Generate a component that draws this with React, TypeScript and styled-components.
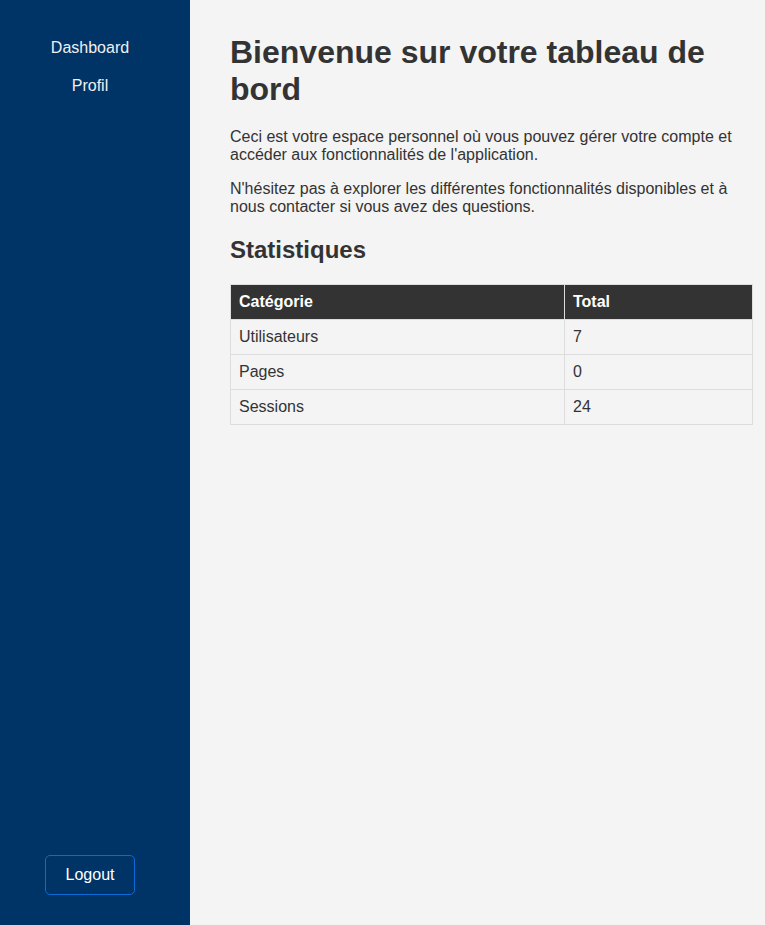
import React from "react";
import styled, { createGlobalStyle } from "styled-components";

const Global = createGlobalStyle`
  html, body { margin: 0; padding: 0; }
  body { font-family: "Liberation Sans", Arial, sans-serif; background: #f4f4f4; color: #333; }
`;

const Layout = styled.div`
  display: flex;
  min-height: 925px;
`;

const Sidebar = styled.nav`
  width: 190px;
  flex-shrink: 0;
  background: #003366;
  display: flex;
  flex-direction: column;
  align-items: center;
  padding: 29px 10px 30px 0;
  box-sizing: border-box;
`;

const NavList = styled.div`
  display: flex;
  flex-direction: column;
  align-items: center;
  flex: 1;
`;

const NavLink = styled.a`
  color: #f0f0f0;
  text-decoration: none;
  font-size: 16px;
  line-height: 18px;
  padding: 10px 0;
`;

const LogoutButton = styled.button`
  font-family: inherit;
  font-size: 16px;
  line-height: 18px;
  color: #fff;
  background: transparent;
  border: 1px solid #0a6bd6;
  border-radius: 5px;
  padding: 10px 20px;
  cursor: pointer;
`;

const Main = styled.main`
  flex: 1;
  padding: 34px 12px 20px 40px;
`;

const Title = styled.h1`
  font-size: 32px;
  line-height: 37px;
  margin: 0 0 20px;
  font-weight: bold;
`;

const Para = styled.p`
  font-size: 16px;
  line-height: 18px;
  margin: 0 0 16px;
`;

const SubTitle = styled.h2`
  font-size: 24px;
  line-height: 28px;
  margin: 20px 0 20px;
  font-weight: bold;
`;

const Table = styled.table`
  width: 100%;
  border-collapse: collapse;
  font-size: 16px;
`;

const Th = styled.th<{ $narrow?: boolean }>`
  background: #333;
  color: #fff;
  text-align: left;
  padding: 8px;
  line-height: 18px;
  border: 1px solid #ddd;
  font-weight: bold;
  width: ${(p) => (p.$narrow ? "171px" : "auto")};
`;

const Td = styled.td<{ $narrow?: boolean }>`
  padding: 8px;
  line-height: 18px;
  border: 1px solid #ddd;
  width: ${(p) => (p.$narrow ? "171px" : "auto")};
`;

const rows: [string, number][] = [
  ["Utilisateurs", 7],
  ["Pages", 0],
  ["Sessions", 24],
];

export default function App() {
  return (
    <>
      <Global />
      <Layout>
        <Sidebar>
          <NavList>
            <NavLink href="#">Dashboard</NavLink>
            <NavLink href="#">Profil</NavLink>
          </NavList>
          <LogoutButton>Logout</LogoutButton>
        </Sidebar>
        <Main>
          <Title>Bienvenue sur votre tableau de bord</Title>
          <Para>
            Ceci est votre espace personnel où vous pouvez gérer votre compte et accéder aux fonctionnalités de l'application.
          </Para>
          <Para>
            N'hésitez pas à explorer les différentes fonctionnalités disponibles et à nous contacter si vous avez des questions.
          </Para>
          <SubTitle>Statistiques</SubTitle>
          <Table>
            <thead>
              <tr>
                <Th>Catégorie</Th>
                <Th $narrow>Total</Th>
              </tr>
            </thead>
            <tbody>
              {rows.map(([k, v]) => (
                <tr key={k}>
                  <Td>{k}</Td>
                  <Td $narrow>{v}</Td>
                </tr>
              ))}
            </tbody>
          </Table>
        </Main>
      </Layout>
    </>
  );
}
